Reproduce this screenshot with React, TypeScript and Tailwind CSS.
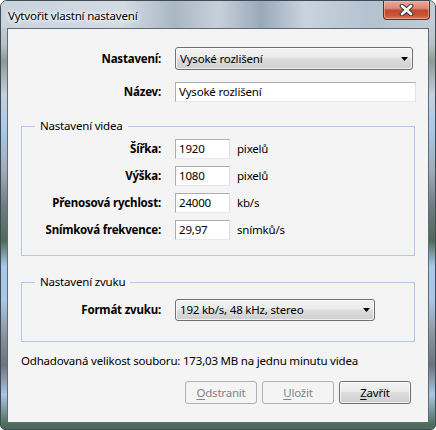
import React from "react";

const labelCls = "shrink-0 text-right font-bold text-[11.5px] leading-[16px]";
const inputCls =
  "h-[20px] border border-[#abadb3] border-r-[#dbdfe6] border-b-[#e3e9ef] bg-white pl-[3px] flex items-center text-[11.5px] leading-[16px]";
const comboCls =
  "flex items-center justify-between rounded-[3px] border border-[#707070] bg-[linear-gradient(#f2f2f2,#ebebeb_45%,#dddddd_50%,#cfcfcf)] shadow-[inset_0_0_0_1px_rgba(255,255,255,0.7)] pl-[4px] pr-[4px] text-[11.5px] leading-[16px]";

function Arrow() {
  return (
    <svg width="7" height="4" viewBox="0 0 7 4">
      <path d="M0 0H7L3.5 4Z" fill="#000" />
    </svg>
  );
}

function Field({ label, value, unit }: { label: string; value: string; unit: string }) {
  return (
    <div className="flex items-center">
      <div className={`${labelCls} w-[139px]`}>{label}</div>
      <div className={`${inputCls} ml-[14px] w-[55px]`}>{value}</div>
      <div className="ml-[7px] text-[11.5px] leading-[16px]">{unit}</div>
    </div>
  );
}

function Btn({ children, disabled }: { children: React.ReactNode; disabled?: boolean }) {
  return (
    <div
      className={
        disabled
          ? "w-[72px] h-[23px] rounded-[3px] border border-[#adb2b5] bg-[#f4f4f4] text-[#838383] flex items-center justify-center text-[11.5px]"
          : "w-[72px] h-[23px] rounded-[3px] border border-[#707070] bg-[linear-gradient(#f2f2f2,#ebebeb_45%,#dddddd_50%,#cfcfcf)] shadow-[inset_0_0_0_1px_rgba(255,255,255,0.7)] text-black flex items-center justify-center text-[11.5px]"
      }
    >
      {children}
    </div>
  );
}

export default function App() {
  return (
    <div className="w-[436px] h-[430px] relative overflow-hidden rounded-t-[7px] rounded-b-[5px] border border-[#3f4b57] bg-[linear-gradient(#cfd6dc_0%,#b9c2c6_10%,#8e9a94_14%,#c4d0dc_22%,#a9c9ea_30%,#a0aab5_40%,#6f7b82_48%,#4f6a55_56%,#a8c9ea_62%,#a9c6e6_70%,#8d939a_78%,#6c737a_85%,#a9c6e3_92%,#4d6c5a_99%)] font-['Noto_Sans',sans-serif] tracking-[-0.2px] text-black">
      {/* titulek */}
      <div className="h-[27px] flex items-center pl-[7px] bg-[linear-gradient(90deg,#c9d3dc_0%,#d2dbe3_28%,#aab7c4_40%,#c6d0da_50%,#9aa9b9_60%,#c8d3de_70%,#b4c2cf_85%,#c0ccd8_100%)]">
        <span className="text-[11.5px] leading-[16px] pt-[2px] [text-shadow:0_0_6px_#fff,0_0_6px_#fff,0_0_3px_#fff]">
          Vytvořit vlastní nastavení
        </span>
      </div>
      <div className="absolute top-0 right-[5px] w-[47px] h-[19px] rounded-b-[4px] border border-t-0 border-[#6b2a1f] bg-[linear-gradient(#e9a99b,#d98a79_40%,#c4472d_52%,#c85537_80%,#d97c5e)] shadow-[inset_0_0_0_1px_rgba(255,200,180,0.5)] flex items-center justify-center">
        <svg width="15" height="12" viewBox="0 0 15 12">
          <path d="M3 2L12 10M12 2L3 10" stroke="#3a3a3a" strokeWidth="4.6" strokeLinecap="round" />
          <path d="M3 2L12 10M12 2L3 10" stroke="#fff" strokeWidth="2.6" strokeLinecap="round" />
        </svg>
      </div>

      {/* klientská oblast */}
      <div className="mx-[6px] h-[395px] border border-[#5d6b78] bg-[#f4f4f4] pl-[13px] pt-[18px]">
        <div className="flex items-center">
          <div className={`${labelCls} w-[140px]`}>Nastavení:</div>
          <div className={`${comboCls} ml-[14px] w-[238px] h-[23px]`}>
            <span>Vysoké rozlišení</span>
            <Arrow />
          </div>
        </div>
        <div className="flex items-center mt-[12px]">
          <div className={`${labelCls} w-[140px]`}>Název:</div>
          <div className={`${inputCls} ml-[14px] w-[241px]`}>Vysoké rozlišení</div>
        </div>

        <fieldset className="mt-[16px] w-[394px] border border-[#b4c8e4] pt-[5px] pb-[15px] flex flex-col gap-[7px]">
          <legend className="ml-[13px] px-[5px] text-[11.5px] leading-[16px]">Nastavení videa</legend>
          <Field label="Šířka:" value="1920" unit="pixelů" />
          <Field label="Výška:" value="1080" unit="pixelů" />
          <Field label="Přenosová rychlost:" value="24000" unit="kb/s" />
          <Field label="Snímková frekvence:" value="29,97" unit="snímků/s" />
        </fieldset>

        <fieldset className="mt-[18px] w-[394px] border border-[#b4c8e4] pt-[9px] pb-[20px]">
          <legend className="ml-[13px] px-[5px] text-[11.5px] leading-[16px]">Nastavení zvuku</legend>
          <div className="flex items-center">
            <div className={`${labelCls} w-[139px]`}>Formát zvuku:</div>
            <div className={`${comboCls} ml-[14px] w-[200px] h-[22px]`}>
              <span>192 kb/s, 48 kHz, stereo</span>
              <Arrow />
            </div>
          </div>
        </fieldset>

        <div className="mt-[11px] text-[11.5px] leading-[16px]">
          Odhadovaná velikost souboru: 173,03 MB na jednu minutu videa
        </div>

        <div className="mt-[12px] flex justify-end gap-[5px] pr-[17px]">
          <Btn disabled>
            <span className="underline underline-offset-2">O</span>dstranit
          </Btn>
          <Btn disabled>
            <span className="underline underline-offset-2">U</span>ložit
          </Btn>
          <Btn>
            <span className="underline underline-offset-2">Z</span>avřít
          </Btn>
        </div>
      </div>
    </div>
  );
}
